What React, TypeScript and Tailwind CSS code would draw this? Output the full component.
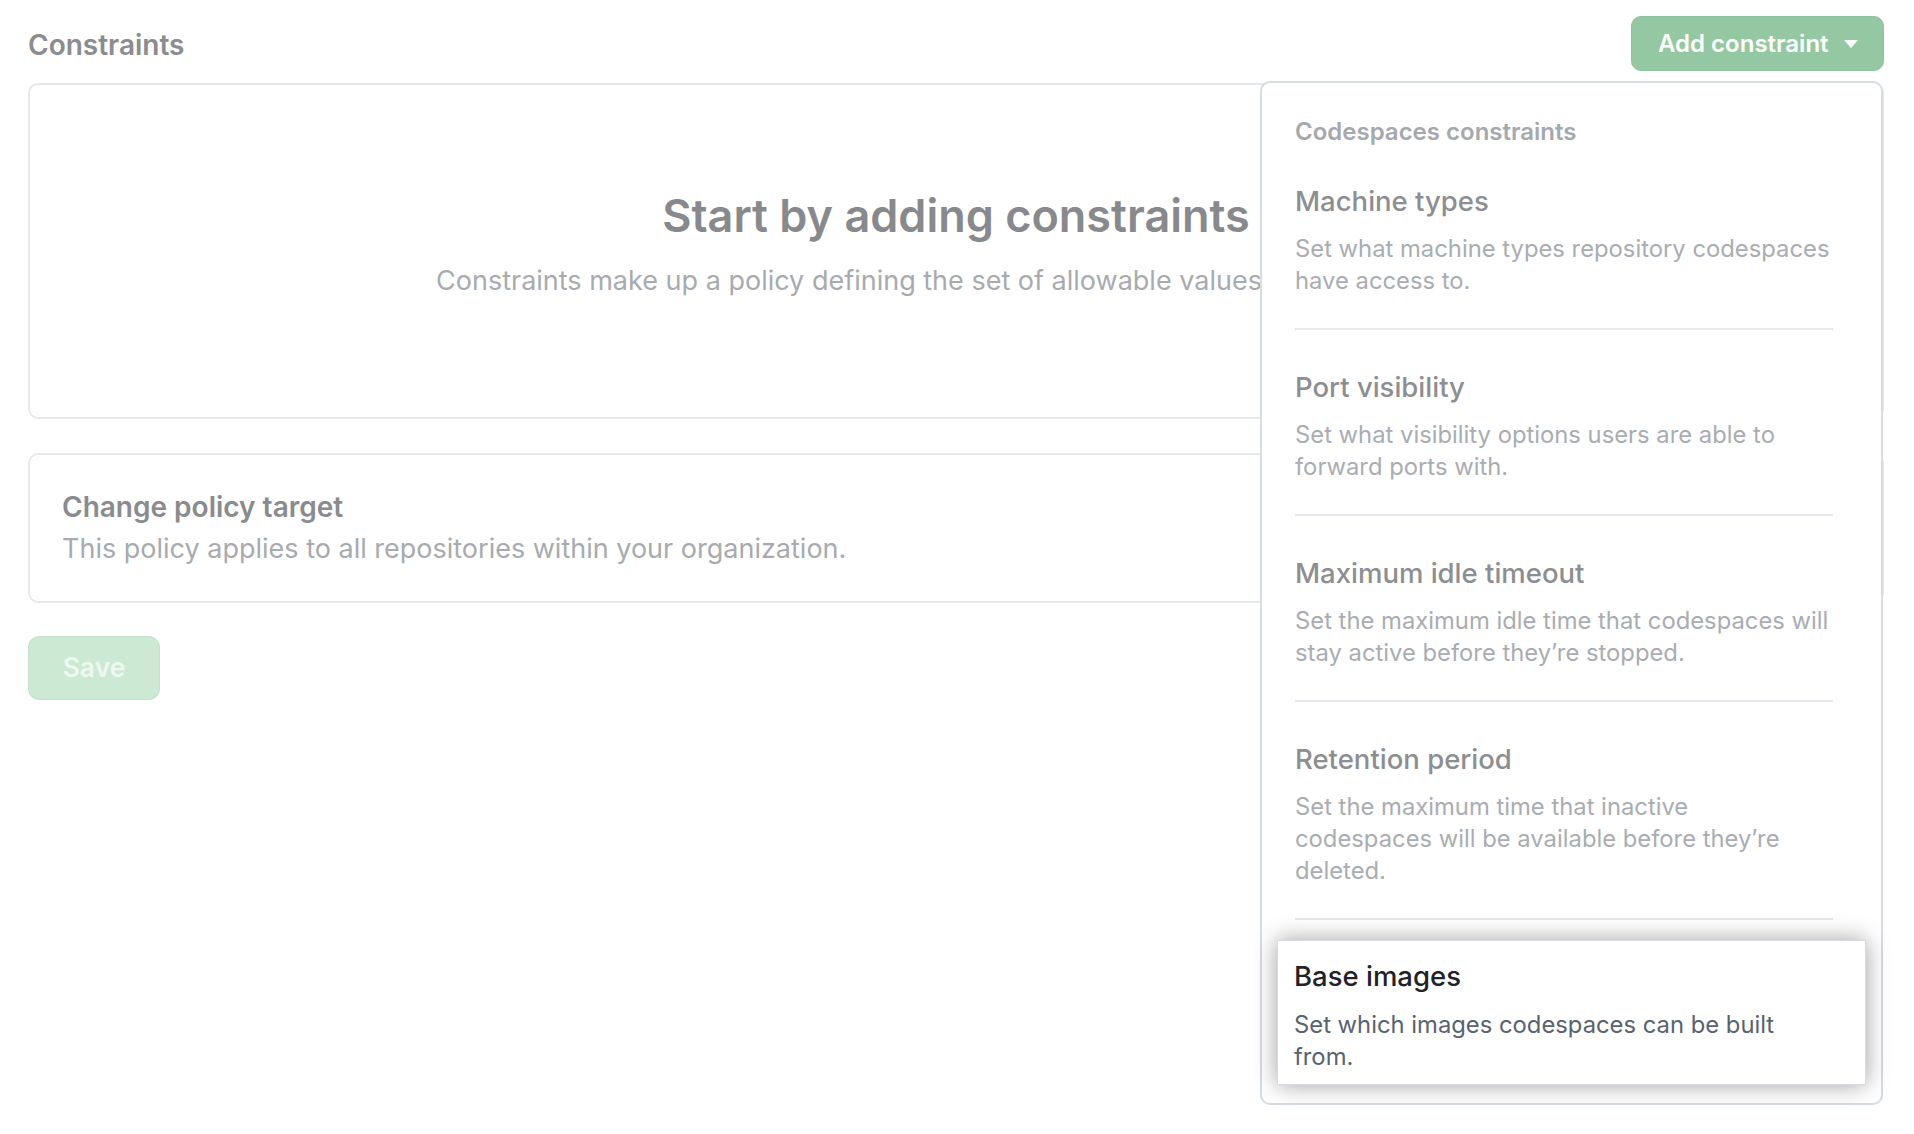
import React from "react";

const items = [
  {
    title: "Machine types",
    lines: ["Set what machine types repository codespaces", "have access to."],
  },
  {
    title: "Port visibility",
    lines: ["Set what visibility options users are able to", "forward ports with."],
  },
  {
    title: "Maximum idle timeout",
    lines: ["Set the maximum idle time that codespaces will", "stay active before they\u2019re stopped."],
  },
  {
    title: "Retention period",
    lines: [
      "Set the maximum time that inactive",
      "codespaces will be available before they\u2019re",
      "deleted.",
    ],
  },
];

function Caret() {
  return (
    <svg width="14" height="8" viewBox="0 0 14 8" className="ml-[15px]">
      <polygon points="0,0 14,0 7,8" fill="currentColor" />
    </svg>
  );
}

export default function App() {
  return (
    <div
      className="relative min-h-screen w-full bg-white pl-[28px] pr-[30px] pt-[16px]"
      style={{ fontFamily: "Inter, 'Liberation Sans', sans-serif" }}
    >
      <div className="flex items-center justify-between">
        <h1 className="pt-[2px] text-[28px] font-semibold text-[#8a8c8f]">Constraints</h1>
        <button className="flex h-[55px] w-[253px] items-center rounded-[10px] border border-[#8dc29c] bg-[#94c8a2] pl-[26px] text-[24px] font-semibold text-white">
          Add constraint
          <Caret />
        </button>
      </div>

      <div className="mt-[12px] h-[336px] overflow-hidden rounded-[10px] border-2 border-[#e6e9ec] pt-[104px] text-center">
        <h2 className="text-[45px] leading-[54px] font-semibold text-[#88898c]">
          Start by adding constraints
        </h2>
        <p className="mt-[22px] whitespace-nowrap text-[27px] leading-[32px] text-[#a7abaf]">
          Constraints make up a policy defining the set of allowable values for codespaces.
        </p>
      </div>

      <div className="mt-[34px] h-[150px] rounded-[10px] border-2 border-[#e6e9ec] px-[32px] pt-[34px]">
        <div className="text-[28px] leading-[36px] font-semibold text-[#8a8b8e]">Change policy target</div>
        <div className="mt-[8px] text-[27px] leading-[32px] text-[#a7abaf]">
          This policy applies to all repositories within your organization.
        </div>
      </div>

      <button className="mt-[33px] h-[64px] w-[132px] rounded-[11px] border border-[#c2e2ca] bg-[#cbe9d3] text-[26.5px] font-semibold text-[#eef8f0]">
        Save
      </button>

      <div className="absolute right-[31px] top-[81px] w-[623px] rounded-[10px] border-2 border-[#d6dce2] bg-white pb-[18px] pt-[35px]">
        <div className="px-[33px] text-[24px] leading-[28px] font-semibold text-[#a5a9ad]">
          Codespaces constraints
        </div>
        <div className="pl-[33px] pr-[48px]">
          {items.map((it, i) => (
            <div
              key={it.title}
              className={
                "border-b-2 border-[#e6e9ed] pb-[31px] " + (i === 0 ? "pt-[38px]" : "pt-[40px]")
              }
            >
              <div className="text-[27.5px] leading-[34px] font-medium text-[#8c8e91]">{it.title}</div>
              <div className="mt-[15px] text-[23.8px] leading-[32px] text-[#a9adb2]">
                {it.lines.map((l) => (
                  <div key={l} className="whitespace-nowrap">
                    {l}
                  </div>
                ))}
              </div>
            </div>
          ))}
        </div>
        <div className="mx-[15px] mt-[20px] border border-[#d8dce0] bg-white px-[16px] pb-[11px] pt-[18px] shadow-[0_0_22px_rgba(0,0,0,0.38)]">
          <div className="text-[27.5px] leading-[34px] font-medium text-[#1f2328]">Base images</div>
          <div className="mt-[16px] text-[23.8px] leading-[32px] text-[#59636e]">
            <div className="whitespace-nowrap">Set which images codespaces can be built</div>
            <div>from.</div>
          </div>
        </div>
      </div>
    </div>
  );
}
